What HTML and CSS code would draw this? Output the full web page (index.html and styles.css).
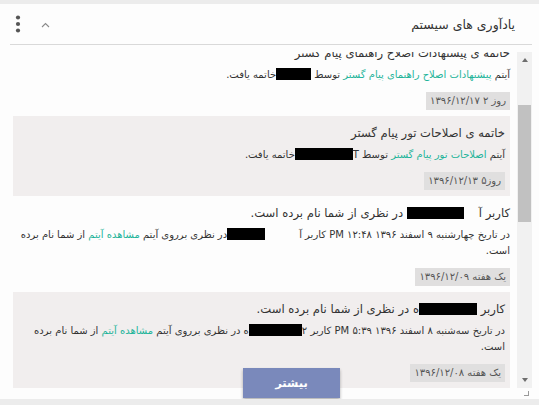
FILE: index.html
```html
<!DOCTYPE html>
<html lang="fa" dir="rtl">
<head>
<meta charset="utf-8">
<title>یادآوری های سیستم</title>
<link rel="stylesheet" href="styles.css">
</head>
<body>
<div class="panel">
  <div class="panel-head">
    <h2 class="panel-title">یادآوری های سیستم</h2>
    <div class="toolbox">
      <span class="tool chevron">
        <svg width="9" height="6" viewBox="0 0 9 6"><path d="M1 5 L4.5 1.5 L8 5" fill="none" stroke="#8a8a8a" stroke-width="1.1"/></svg>
      </span>
      <span class="tool kebab">
        <svg width="6" height="18" viewBox="0 0 6 18"><circle cx="3" cy="2.5" r="2.1" fill="#555"/><circle cx="3" cy="9" r="2.1" fill="#555"/><circle cx="3" cy="15.5" r="2.1" fill="#555"/></svg>
      </span>
    </div>
  </div>
  <div class="list-wrap">
    <div class="list" id="list">
      <div class="item">
        <div class="item-title">کاربر <span class="redact w50"></span> در نظری از شما نام برده است.</div>
        <div class="item-desc">در تاریخ پنجشنبه ۱۰ اسفند ۱۳۹۶ ۹:۱۵ AM کاربر آ<span class="gap w30"></span><span class="redact w50"></span> در نظری برروی آیتم <a class="link">مشاهده آیتم</a> از شما نام برده است.</div>
        <div class="meta"><span class="badge">روز ۱ ۱۳۹۶/۱۲/۱۸</span></div>
      </div>
      <div class="item">
        <div class="item-title">خاتمه ی پیشنهادات اصلاح راهنمای پیام گستر</div>
        <div class="item-desc">آیتم <a class="link">پیشنهادات اصلاح راهنمای پیام گستر</a> توسط <span class="redact w35"></span>خاتمه یافت.</div>
        <div class="meta"><span class="badge">روز ۲ ۱۳۹۶/۱۲/۱۷</span></div>
      </div>
      <div class="item">
        <div class="item-title">خاتمه ی اصلاحات تور پیام گستر</div>
        <div class="item-desc">آیتم <a class="link">اصلاحات تور پیام گستر</a> توسط T<span class="redact w58"></span>خاتمه یافت.</div>
        <div class="meta"><span class="badge">روز۵ ۱۳۹۶/۱۲/۱۳</span></div>
      </div>
      <div class="item">
        <div class="item-title">کاربر آ<span class="gap w15"></span><span class="redact w57"></span> در نظری از شما نام برده است.</div>
        <div class="item-desc">در تاریخ چهارشنبه ۹ اسفند ۱۳۹۶ ۱۲:۴۸ PM کاربر آ<span class="gap w34"></span><span class="redact w38"></span>در نظری برروی آیتم <a class="link">مشاهده آیتم</a> از شما نام برده است.</div>
        <div class="meta"><span class="badge">یک هفته ۱۳۹۶/۱۲/۰۹</span></div>
      </div>
      <div class="item">
        <div class="item-title">کاربر <span class="redact w58"></span>ه در نظری از شما نام برده است.</div>
        <div class="item-desc">در تاریخ سه‌شنبه ۸ اسفند ۱۳۹۶ ۵:۳۹ PM کاربر ۲<span class="redact w53"></span>ه در نظری برروی آیتم <a class="link">مشاهده آیتم</a> از شما نام برده است.</div>
        <div class="meta"><span class="badge">یک هفته ۱۳۹۶/۱۲/۰۸</span></div>
      </div>
      <div class="item">
        <div class="item-title">خاتمه ی بررسی گزارش های پیام گستر</div>
        <div class="item-desc">آیتم <a class="link">بررسی گزارش های پیام گستر</a> توسط <span class="redact w50"></span>خاتمه یافت.</div>
        <div class="meta"><span class="badge">یک هفته ۱۳۹۶/۱۲/۰۷</span></div>
      </div>
    </div>
    <div class="vscroll" aria-hidden="true">
      <span class="sb-btn sb-up"></span>
      <span class="sb-track"><span class="sb-thumb"></span></span>
      <span class="sb-btn sb-down"></span>
      <span class="sb-corner"></span>
    </div>
    <button class="more" type="button">بیشتر</button>
  </div>
</div>
<script src="script.js"></script>
</body>
</html>
```

FILE: styles.css
```css
html, body {
  margin: 0;
  padding: 0;
}
body {
  background: #ececec;
  padding-top: 4px;
  font-family: "DejaVu Sans", "Noto Sans", sans-serif;
  color: #333;
}
.panel {
  height: 395px;
  box-sizing: border-box;
  background: #fdfdfd;
  padding: 0 7px 2px 10px;
  display: flex;
  flex-direction: column;
}
.panel-head {
  height: 40px;
  border-bottom: 1px solid #d9d9d9;
  display: flex;
  align-items: center;
  justify-content: space-between;
  padding: 0 17px 0 5px;
}
.panel-title {
  margin: 0;
  font-size: 12.5px;
  font-weight: normal;
  color: #333;
}
.toolbox {
  display: flex;
  align-items: center;
  gap: 20px;
}
.tool {
  display: flex;
  align-items: center;
}
.chevron { padding-top: 1px; }
.list-wrap {
  position: relative;
  direction: ltr;
  display: flex;
  margin: 7px 0 0 3px;
  height: 345px;
}
.list {
  flex: 1;
  min-width: 0;
  height: 345px;
  overflow: hidden;
  padding-right: 5px;
  box-sizing: border-box;
}
.vscroll {
  width: 15px;
  display: flex;
  flex-direction: column;
}
.sb-btn {
  height: 15px;
  flex: none;
  background: #f1f1f1;
  display: flex;
  align-items: center;
  justify-content: center;
}
.sb-up::before,
.sb-down::before {
  content: "";
  border-left: 3.5px solid transparent;
  border-right: 3.5px solid transparent;
}
.sb-up::before { border-bottom: 4px solid #6e6e6e; }
.sb-down::before { border-top: 4px solid #6e6e6e; }
.sb-down { height: 16px; }
.sb-track {
  flex: 1;
  background: #f1f1f1;
  padding-top: 38px;
  box-sizing: border-box;
  display: flex;
  flex-direction: column;
}
.sb-thumb {
  height: 117px;
  margin: 0 1px;
  background: #c1c1c1;
}
.sb-corner {
  height: 9px;
  flex: none;
  background: #fdfdfd;
  position: relative;
}
.sb-corner::before {
  content: "";
  position: absolute;
  right: 3px;
  bottom: 1px;
  width: 4px;
  height: 4px;
  border-right: 1px solid #9a9a9a;
  border-bottom: 1px solid #9a9a9a;
}
.item {
  direction: rtl;
  padding: 7px 2px 6px 5px;
  background: #fdfdfd;
}
.item:nth-child(odd) {
  background: #f1eeee;
  margin-right: 2px;
  padding-right: 5px;
}
.item-title {
  font-size: 11.6px;
  line-height: 20px;
  color: #333;
}
.item-desc {
  margin-top: 4px;
  font-size: 10px;
  line-height: 16px;
  color: #333;
}
.link {
  color: #1fb49a;
  text-decoration: none;
}
.redact,
.gap {
  display: inline-block;
  height: 12px;
  vertical-align: -2px;
}
.redact { background: #000; }
.w15 { width: 15px; }
.w30 { width: 30px; }
.w34 { width: 34px; }
.w35 { width: 35px; }
.w38 { width: 38px; }
.w50 { width: 50px; }
.w53 { width: 53px; }
.w57 { width: 57px; }
.w58 { width: 58px; }
.meta {
  margin-top: 9px;
  display: flex;
}
.badge {
  height: 18px;
  line-height: 18px;
  padding: 0 4px;
  background: #e0dfdf;
  color: #555;
  font-size: 10px;
  letter-spacing: 0.5px;
}
.more {
  position: absolute;
  left: 230px;
  bottom: -1px;
  width: 97px;
  height: 30px;
  border: 0;
  background: #7a89bb;
  color: #fff;
  font-family: "DejaVu Sans", sans-serif;
  font-weight: bold;
  font-size: 11.5px;
  box-shadow: 0 2px 3px rgba(0, 0, 0, 0.3);
}
```

FILE: script.js
```js
document.getElementById('list').scrollTop = 112;
```
